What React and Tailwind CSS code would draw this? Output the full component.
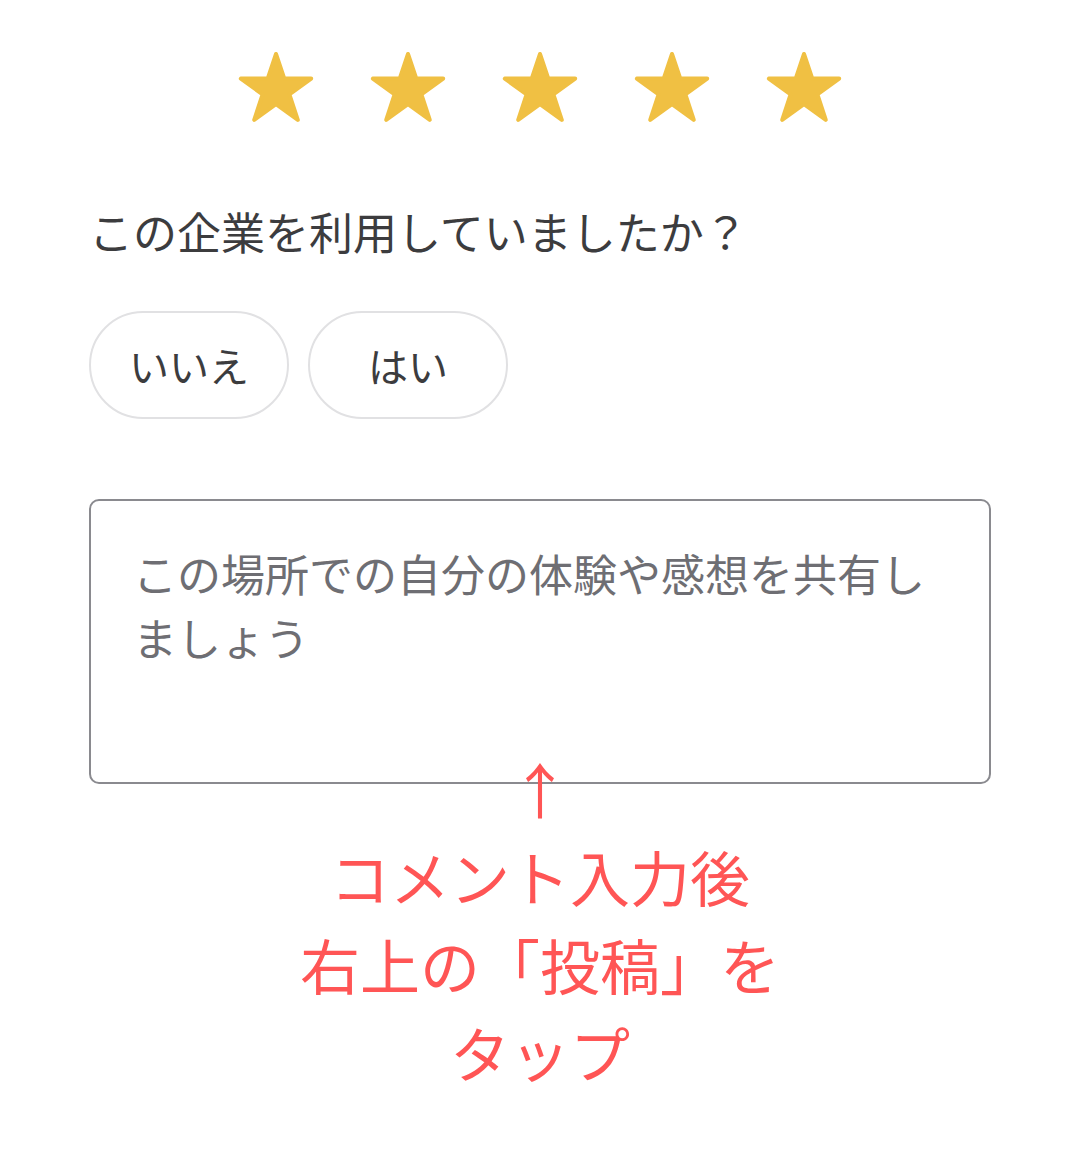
import React from 'react';

const Star = () => (
  <svg width="80" height="76" viewBox="0 0 80 76" className="shrink-0">
    <polygon
      points="40,4 48.3,28.6 75.2,28.6 53.4,44.4 61.8,69.9 40,54.1 18.2,69.9 26.6,44.4 4.8,28.6 31.7,28.6"
      fill="#F0C043"
      stroke="#F0C043"
      strokeWidth="4"
      strokeLinejoin="round"
    />
  </svg>
);

const App = () => {
  return (
    <div className="w-[1080px] min-h-[1154px] bg-white font-['Noto_Sans_CJK_JP',sans-serif]">
      {/* rating */}
      <div className="flex justify-center gap-[52px] pt-[50px]">
        {[0, 1, 2, 3, 4].map((i) => (
          <Star key={i} />
        ))}
      </div>

      <div className="px-[89px]">
        <p className="mt-[75px] text-[44px] leading-[60px] text-[#3c3c3e]">この企業を利用していましたか？</p>

        <div className="flex gap-[19px] mt-[50px]">
          <button className="w-[200px] h-[108px] rounded-[54px] border-2 border-[#e1e1e3] bg-white text-[40px] text-[#3c3c3e]">
            いいえ
          </button>
          <button className="w-[200px] h-[108px] rounded-[54px] border-2 border-[#e1e1e3] bg-white text-[40px] text-[#3c3c3e]">
            はい
          </button>
        </div>

        <textarea
          className="block mt-[80px] w-full h-[285px] resize-none rounded-[10px] border-2 border-[#8a8a8f] pt-[40px] pl-[42px] pr-[42px] text-[44px] leading-[64px] text-[#3c3c3e] placeholder:text-[#6e6e73] outline-none"
          placeholder="この場所での自分の体験や感想を共有しましょう"
        />
      </div>

      {/* hint */}
      <div className="-mt-[40px] text-center text-[60px] leading-[88px] text-[#ff5555]">
        <div>↑</div>
        <div>コメント入力後</div>
        <div>右上の「投稿」を</div>
        <div>タップ</div>
      </div>
    </div>
  );
};

export default App;
